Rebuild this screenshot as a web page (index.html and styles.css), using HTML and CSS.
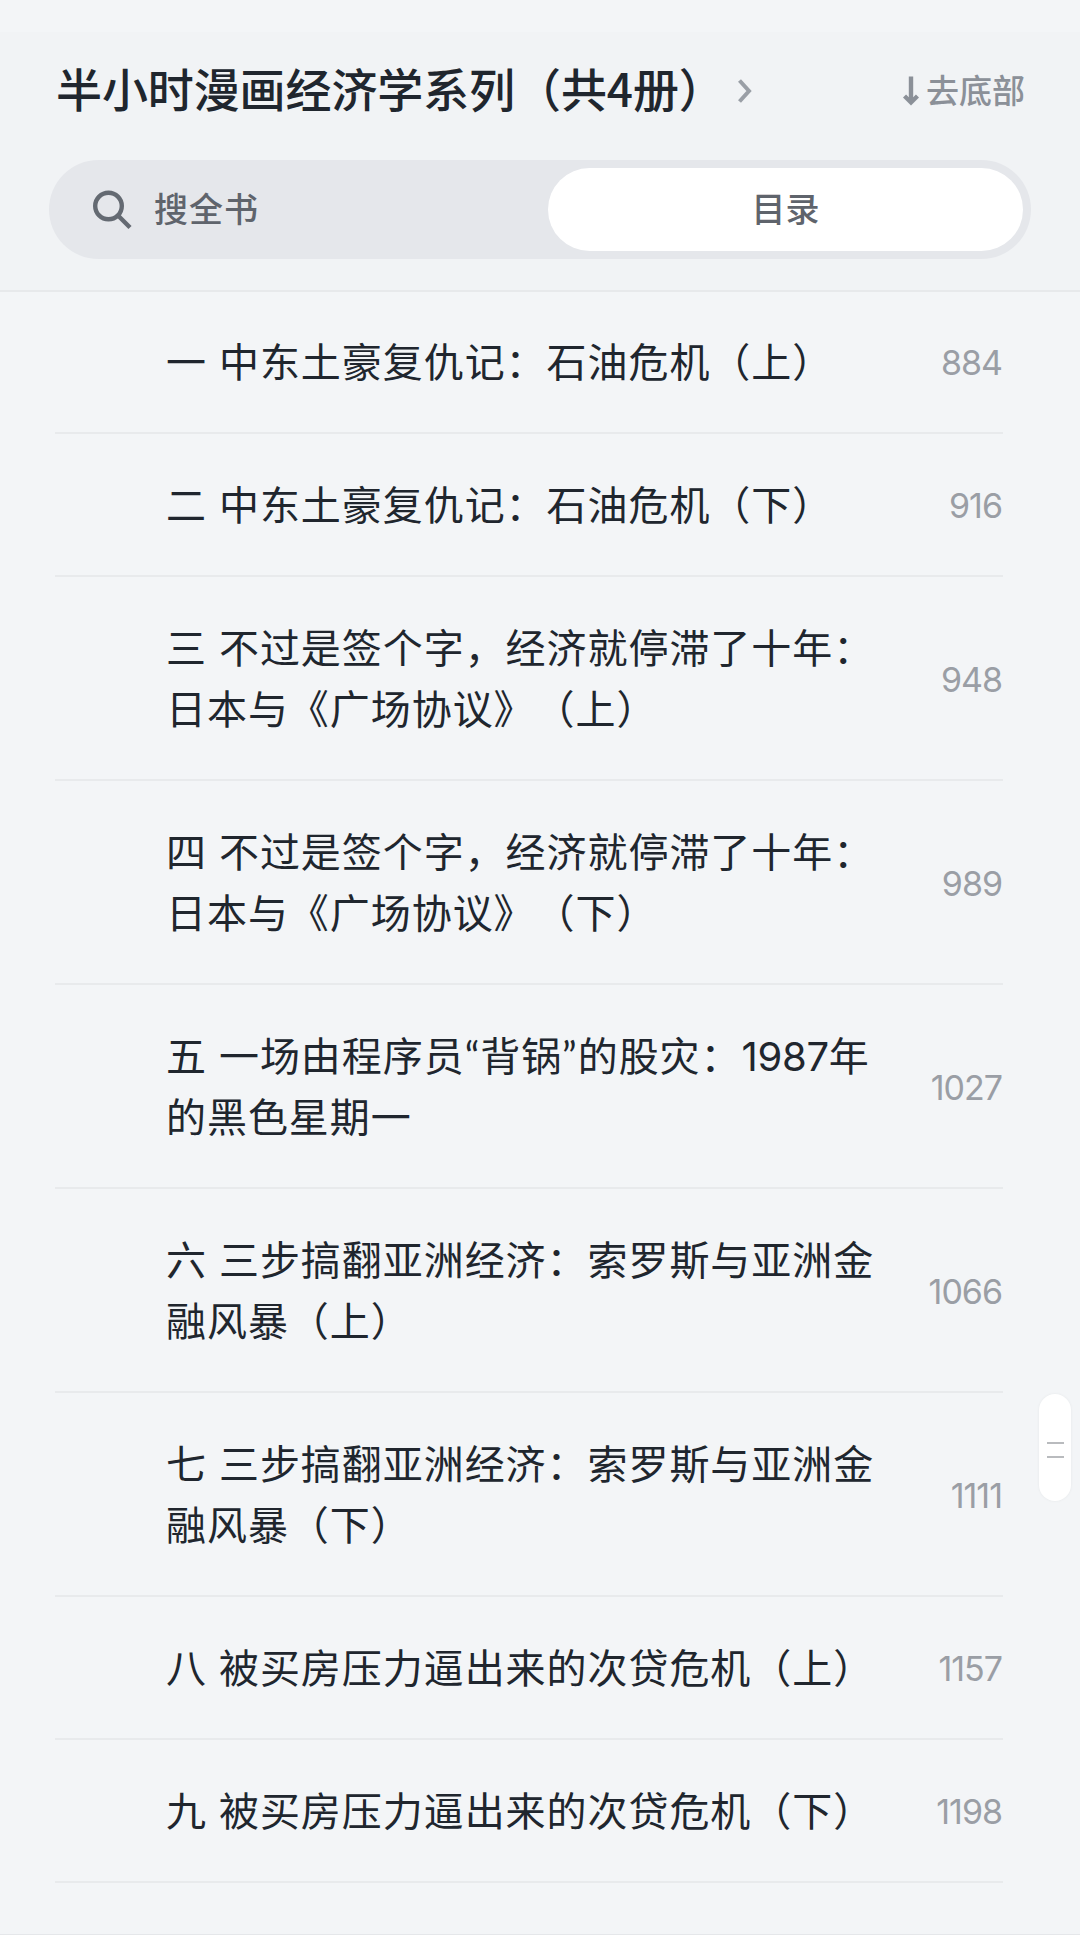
FILE: index.html
```html
<!DOCTYPE html>
<html lang="zh-CN">
<head>
    <meta charset="UTF-8">
    <meta name="viewport" content="width=device-width, initial-scale=1.0">
    <title>目录</title>
    <link rel="stylesheet" href="styles.css">
</head>
<body>

    <div class="top-strip"></div>
    <header class="header">
        <div class="title-bar">
            <h1 class="book-title">半小时漫画经济学系列（共4册）</h1>
            <svg class="chevron" width="16" height="28" viewBox="0 0 16 28">
                <path d="M2.5 3.5 L12 14 L2.5 24.5"/>
            </svg>
            <a class="to-bottom">
                <svg class="arrow" width="16" height="30" viewBox="0 0 16 30">
                    <path d="M8 0.5 V26 M1.5 20 L8 26.5 L14.5 20"/>
                </svg>
                <span>去底部</span>
            </a>
        </div>
        <div class="switcher">
            <div class="search">
                <svg class="search-icon" width="40" height="40" viewBox="0 0 40 40">
                    <circle cx="16.5" cy="16" r="13.3"/>
                    <path d="M26 25.5 L38 37.5"/>
                </svg>
                <span>搜全书</span>
            </div>
            <div class="tab">目录</div>
        </div>
    </header>

    <ul class="chapters">
        <li class="chapter">
            <span class="name">一 中东土豪复仇记：石油危机（上）</span>
            <span class="page">884</span>
        </li>
        <li class="chapter">
            <span class="name">二 中东土豪复仇记：石油危机（下）</span>
            <span class="page">916</span>
        </li>
        <li class="chapter">
            <span class="name">三 不过是签个字，经济就停滞了十年：日本与《广场协议》（上）</span>
            <span class="page">948</span>
        </li>
        <li class="chapter">
            <span class="name">四 不过是签个字，经济就停滞了十年：日本与《广场协议》（下）</span>
            <span class="page">989</span>
        </li>
        <li class="chapter">
            <span class="name">五 一场由程序员“背锅”的股灾：<span class="year">1987</span>年的黑色星期一</span>
            <span class="page">1027</span>
        </li>
        <li class="chapter">
            <span class="name">六 三步搞翻亚洲经济：索罗斯与亚洲金融风暴（上）</span>
            <span class="page">1066</span>
        </li>
        <li class="chapter">
            <span class="name">七 三步搞翻亚洲经济：索罗斯与亚洲金融风暴（下）</span>
            <span class="page">1111</span>
        </li>
        <li class="chapter">
            <span class="name">八 被买房压力逼出来的次贷危机（上）</span>
            <span class="page">1157</span>
        </li>
        <li class="chapter">
            <span class="name">九 被买房压力逼出来的次贷危机（下）</span>
            <span class="page">1198</span>
        </li>
    </ul>

    <!-- fast scroll handle -->
    <div class="scroll-handle">
        <span class="grip"></span>
        <span class="grip"></span>
    </div>

</body>
</html>
```

FILE: styles.css
```css
* {
    margin: 0;
    padding: 0;
    box-sizing: border-box;
}
body {
    position: relative;
    display: flex;
    flex-direction: column;
    height: 1935px;
    background-color: #f3f5f7;
    font-family: "Noto Sans CJK SC", sans-serif;
    color: #20262e;
    overflow: hidden;
    text-spacing-trim: space-all;
    border-bottom: 1px solid #e5e7ea;
}
svg {
    display: block;
    fill: none;
    flex-shrink: 0;
}
.top-strip {
    height: 32px;
}
.header {
    height: 260px;
    padding: 28px 49px 0;
    background-color: #f1f3f5;
    border-bottom: 2px solid #e7e9eb;
}
.title-bar {
    display: flex;
    align-items: center;
    height: 62px;
    padding: 0 6px 0 7px;
}
.book-title {
    padding-bottom: 7px;
    font-size: 46px;
    font-weight: 500;
    line-height: 55px;
    letter-spacing: -0.1px;
    white-space: nowrap;
}
.chevron {
    margin-left: 12px;
    margin-bottom: 1px;
    stroke: #9a9fa6;
    stroke-width: 4;
}
.to-bottom {
    display: flex;
    align-items: center;
    gap: 7px;
    margin-left: auto;
    font-size: 33px;
    font-weight: 500;
    line-height: 50px;
    color: #8b9098;
}
.to-bottom span {
    padding-bottom: 5px;
}
.arrow {
    stroke: #8b9098;
    stroke-width: 4.4;
}
.switcher {
    display: grid;
    grid-template-columns: 1fr 475px;
    height: 99px;
    margin-top: 38px;
    padding: 8px;
    border-radius: 50px;
    background-color: #e5e7eb;
    color: #5f646c;
    font-size: 34px;
    font-weight: 500;
}
.search {
    display: flex;
    align-items: center;
    gap: 22px;
    padding-left: 35px;
    letter-spacing: 1px;
}
.search span {
    padding-bottom: 4px;
}
.search-icon {
    stroke: #646a72;
    stroke-width: 4.4;
}
.tab {
    display: flex;
    align-items: center;
    justify-content: center;
    padding-bottom: 4px;
    border-radius: 42px;
    background-color: #fff;
}
.chapters {
    list-style: none;
    padding: 0 77px 0 55px;
}
.chapter {
    display: flex;
    align-items: center;
    justify-content: space-between;
    padding: 41px 0 39px 111px;
    border-bottom: 2px solid #e8eaec;
}
.chapter:first-child {
    padding-top: 40px;
}
.name {
    width: 722px;
    font-family: Lato, "Noto Sans CJK SC", sans-serif;
    font-size: 40px;
    line-height: 61px;
    letter-spacing: 0.95px;
    word-spacing: 0.8px;
}
.year {
    font-family: Inter, sans-serif;
    letter-spacing: -0.3px;
}
.page {
    padding-right: 1px;
    font-family: Inter, sans-serif;
    font-size: 34px;
    line-height: 61px;
    letter-spacing: -1px;
    color: #9a9ea5;
}
.scroll-handle {
    position: absolute;
    top: 1394px;
    left: 1039px;
    display: flex;
    flex-direction: column;
    align-items: center;
    justify-content: center;
    gap: 12px;
    width: 32px;
    height: 107px;
    padding-top: 4px;
    border-radius: 16px;
    background-color: #fff;
    box-shadow: 0 0 3px rgba(0, 0, 0, 0.06);
}
.grip {
    width: 17px;
    height: 2px;
    background-color: #b9bbbe;
}
```
